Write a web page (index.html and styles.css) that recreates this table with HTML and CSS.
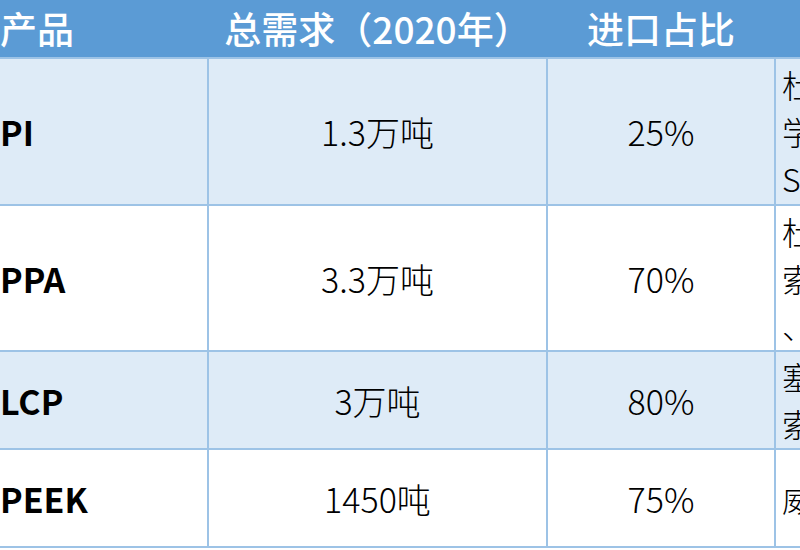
FILE: index.html
```html
<!DOCTYPE html>
<html lang="zh-CN">
<head>
<meta charset="utf-8">
<title>进口占比</title>
<link rel="stylesheet" href="styles.css">
</head>
<body>
<div class="table">
  <div class="thead">
    <div class="th th-left">产品</div>
    <div class="th">总需求（2020年）</div>
    <div class="th">进口占比</div>
    <div class="th"></div>
  </div>
  <div class="tbody">
    <div class="td name row-a tall">PI</div>
    <div class="td num row-a tall">1.3万吨</div>
    <div class="td num row-a tall">25%</div>
    <div class="td sup row-a tall">杜邦、钟渊化<br>学、宇部兴产、<br>SKC Kolon</div>

    <div class="td name row-b tall">PPA</div>
    <div class="td num row-b tall">3.3万吨</div>
    <div class="td num row-b tall">70%</div>
    <div class="td sup row-b tall">杜邦、阿科玛<br>索尔维、三井<br>、赢创</div>

    <div class="td name row-a short">LCP</div>
    <div class="td num row-a short">3万吨</div>
    <div class="td num row-a short">80%</div>
    <div class="td sup row-a short">塞拉尼斯、宝理<br>索尔维</div>

    <div class="td name row-b short">PEEK</div>
    <div class="td num row-b short">1450吨</div>
    <div class="td num row-b short">75%</div>
    <div class="td sup row-b short">威格斯、索尔维</div>
  </div>
</div>
</body>
</html>
```
FILE: styles.css
```css
html, body {
  margin: 0;
  padding: 0;
  background: #ffffff;
  overflow: hidden;
}

body {
  width: 800px;
  height: 550px;
  font-family: "Noto Sans CJK SC", "Noto Sans", sans-serif;
}

.table {
  width: 1100px;
}

.thead {
  display: grid;
  grid-template-columns: 207px 337px 226px 324px;
  column-gap: 2px;
  height: 57px;
  background: #5b9bd5;
}

.th {
  display: flex;
  align-items: center;
  justify-content: center;
  color: #ffffff;
  font-size: 37px;
  font-weight: 500;
  white-space: nowrap;
  padding-bottom: 2px;
}

.th-left {
  justify-content: flex-start;
}

.tbody {
  display: grid;
  grid-template-columns: 207px 337px 226px 324px;
  grid-template-rows: 145px 144px 96px 96px;
  gap: 2px;
  padding: 2px 0;
  background: #9dc3e6;
}

.td {
  display: flex;
  align-items: center;
  font-size: 34px;
  color: #000000;
  white-space: nowrap;
}

.row-a { background: #deebf7; }
.row-b { background: #ffffff; }

.name {
  font-weight: 700;
  font-size: 34px;
  padding-left: 0;
}

.num {
  justify-content: center;
  font-weight: 300;
}

.sup {
  padding-left: 6px;
  line-height: 47px;
  font-size: 32px;
  font-weight: 300;
}
```
